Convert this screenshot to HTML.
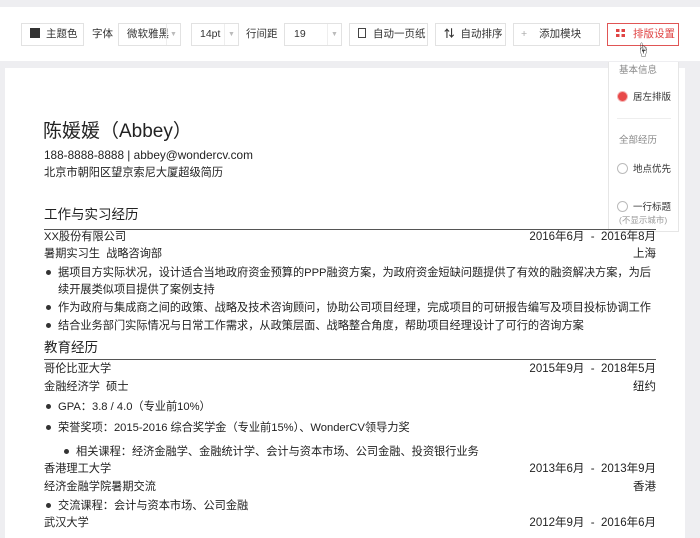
<!DOCTYPE html>
<html><head><meta charset="utf-8">
<style>
*{margin:0;padding:0;box-sizing:border-box}
body{width:700px;height:526px;overflow:hidden;background:#eeeef1;font-family:"Liberation Sans","Noto Sans CJK SC",sans-serif;color:#222;position:relative}
.bar{position:absolute;left:0;top:7px;width:700px;height:54px;background:#fff}
.b{position:absolute;top:23px;height:23px;border:1px solid #e2e2e2;background:#fff;font-size:10.5px;color:#333;line-height:21px;padding-left:8px;white-space:nowrap}
.t{position:absolute;top:23px;line-height:23px;font-size:10.5px;color:#333}
.arr{position:absolute;right:0;top:0;width:14px;height:21px;border-left:1px solid #eee;color:#bbb;font-size:7px;text-align:center}
.page{position:absolute;left:5px;top:68px;width:680px;height:470px;background:#fff}
.l{position:absolute;font-size:11.2px;line-height:18px;white-space:nowrap;color:#222}
.r{position:absolute;right:44px;font-size:11.5px;line-height:18px;white-space:nowrap;text-align:right}
.h{position:absolute;left:44px;font-size:13.5px;line-height:18px}
.rule{position:absolute;left:44px;width:612px;height:1px;background:#555}
.dot{position:absolute;left:46px;width:5px;height:5px;border-radius:50%;background:#333}
.dd{position:absolute;left:608px;top:62px;width:71px;height:170px;background:#fff;border:1px solid #e6e6e6;border-top:none;font-size:9.5px}
.dd div{position:absolute;white-space:nowrap}
.rad{width:11px;height:11px;border-radius:50%;border:1px solid #bbb;left:8px}
</style></head><body>
<div class="bar"></div>
<div class="b" style="left:21px;width:63px"><span style="display:inline-block;width:10px;height:10px;background:#333;vertical-align:-1px;margin-right:6px"></span>主题色</div>
<div class="t" style="left:92px">字体</div>
<div class="b" style="left:118px;width:63px">微软雅黑<span class="arr">▼</span></div>
<div class="b" style="left:191px;width:48px">14pt<span class="arr">▼</span></div>
<div class="t" style="left:246px">行间距</div>
<div class="b" style="left:284px;width:58px;padding-left:9px">19<span class="arr">▼</span></div>
<div class="b" style="left:349px;width:79px"><span style="display:inline-block;width:8px;height:10px;border:1px solid #444;vertical-align:-1px;margin-right:7px"></span>自动一页纸</div>
<div class="b" style="left:435px;width:71px"><span style="font-weight:bold;margin-right:6px">⇅</span>自动排序</div>
<div class="b" style="left:513px;width:87px;padding-left:7px"><span style="color:#aaa;margin-right:12px">+</span>添加模块</div>
<div class="b" style="left:607px;width:72px;border-color:#e05555;color:#e04444;padding-left:8px"><span style="display:inline-block;width:9px;height:8px;background:linear-gradient(90deg,#e04444 40%,transparent 40%,transparent 60%,#e04444 60%);vertical-align:0;margin-right:8px;-webkit-mask:linear-gradient(#000 40%,transparent 40%,transparent 60%,#000 60%)"></span>排版设置</div>
<div class="page"></div>
<div class="dd">
<div style="left:10px;top:0px;color:#888">基本信息</div>
<div class="rad" style="top:29px;background:#e84848;border-color:#f5b5b5"></div>
<div style="left:24px;top:27px;color:#333">居左排版</div>
<div style="left:8px;top:56px;width:54px;height:1px;background:#eee"></div>
<div style="left:10px;top:70px;color:#888">全部经历</div>
<div class="rad" style="top:101px"></div>
<div style="left:24px;top:99px;color:#333">地点优先</div>
<div class="rad" style="top:139px"></div>
<div style="left:24px;top:137px;color:#333">一行标题</div>
<div style="left:10px;top:152px;color:#999;font-size:8.5px">(不显示城市)</div>
</div>
<div style="position:absolute;left:636px;top:40px;font-size:14px;color:#333">☝</div>

<div class="l" style="left:43px;top:120px;font-size:19px;line-height:24px">陈媛媛（Abbey）</div>
<div class="l" style="left:44px;top:146px;font-size:11.8px">188-8888-8888 | abbey@wondercv.com</div>
<div class="l" style="left:44px;top:164px">北京市朝阳区望京索尼大厦超级简历</div>
<div class="h" style="top:206px">工作与实习经历</div>
<div class="rule" style="top:229px"></div>
<div class="l" style="left:44px;top:228px">XX股份有限公司</div><div class="r" style="top:228px">2016年6月 &nbsp;- &nbsp;2016年8月</div>
<div class="l" style="left:44px;top:245px">暑期实习生 &nbsp;战略咨询部</div><div class="r" style="top:245px">上海</div>
<div class="dot" style="top:270px"></div><div class="l" style="left:58px;top:264px">据项目方实际状况，设计适合当地政府资金预算的PPP融资方案，为政府资金短缺问题提供了有效的融资解决方案，为后</div>
<div class="l" style="left:58px;top:281px">续开展类似项目提供了案例支持</div>
<div class="dot" style="top:305px"></div><div class="l" style="left:58px;top:299px">作为政府与集成商之间的政策、战略及技术咨询顾问，协助公司项目经理，完成项目的可研报告编写及项目投标协调工作</div>
<div class="dot" style="top:323px"></div><div class="l" style="left:58px;top:317px">结合业务部门实际情况与日常工作需求，从政策层面、战略整合角度，帮助项目经理设计了可行的咨询方案</div>
<div class="h" style="top:339px">教育经历</div>
<div class="rule" style="top:359px"></div>
<div class="l" style="left:44px;top:360px">哥伦比亚大学</div><div class="r" style="top:360px">2015年9月 &nbsp;- &nbsp;2018年5月</div>
<div class="l" style="left:44px;top:378px">金融经济学 &nbsp;硕士</div><div class="r" style="top:378px">纽约</div>
<div class="dot" style="top:404px"></div><div class="l" style="left:58px;top:398px">GPA：3.8 / 4.0（专业前10%）</div>
<div class="dot" style="top:425px"></div><div class="l" style="left:58px;top:419px">荣誉奖项：2015-2016 综合奖学金（专业前15%）、WonderCV领导力奖</div>
<div class="dot" style="top:449px;left:64px"></div><div class="l" style="left:76px;top:443px">相关课程：经济金融学、金融统计学、会计与资本市场、公司金融、投资银行业务</div>
<div class="l" style="left:44px;top:460px">香港理工大学</div><div class="r" style="top:460px">2013年6月 &nbsp;- &nbsp;2013年9月</div>
<div class="l" style="left:44px;top:478px">经济金融学院暑期交流</div><div class="r" style="top:478px">香港</div>
<div class="dot" style="top:503px"></div><div class="l" style="left:58px;top:497px">交流课程：会计与资本市场、公司金融</div>
<div class="l" style="left:44px;top:514px">武汉大学</div><div class="r" style="top:514px">2012年9月 &nbsp;- &nbsp;2016年6月</div>
</body></html>
